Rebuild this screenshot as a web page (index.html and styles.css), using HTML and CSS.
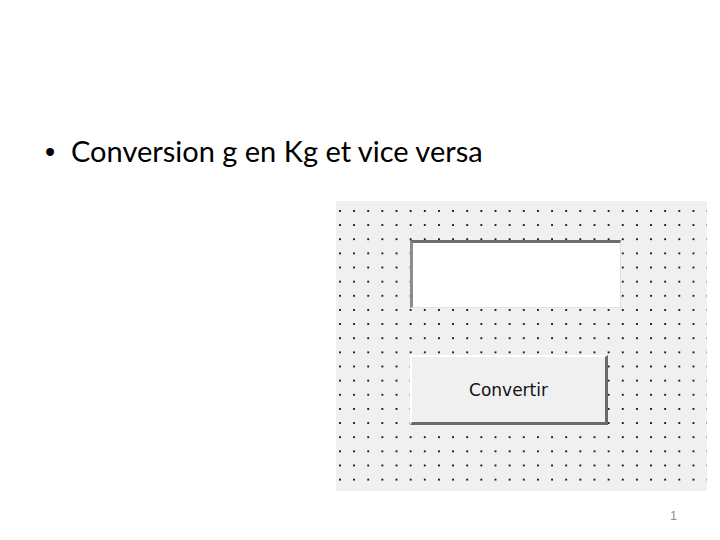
FILE: index.html
```html
<!DOCTYPE html>
<html lang="fr">
<head>
<meta charset="utf-8">
<title>Conversion</title>
<link rel="stylesheet" href="styles.css">
</head>
<body>
<div class="slide">
  <ul class="bullets">
    <li><span class="dot">•</span><span class="txt">Conversion g en Kg et vice versa</span></li>
  </ul>
  <div class="form">
    <div class="textbox"></div>
    <div class="button">Convertir</div>
  </div>
  <div class="footer"><span class="num">1</span></div>
</div>
</body>
</html>
```
FILE: styles.css
```css
html, body {
  margin: 0;
  padding: 0;
  background: #ffffff;
}
.slide {
  width: 720px;
  height: 540px;
  overflow: hidden;
  display: flex;
  flex-direction: column;
}
.bullets {
  list-style: none;
  margin: 0;
  padding: 131px 0 0 45px;
  font-family: Lato, "Liberation Sans", sans-serif;
  font-size: 29px;
  line-height: 40px;
  color: #000;
}
.bullets li {
  display: flex;
  align-items: baseline;
}
.dot {
  width: 26px;
  font-family: "Liberation Sans", sans-serif;
}
.form {
  margin: 29px 0 0 336px;
  width: 371px;
  height: 290px;
  box-sizing: border-box;
  padding: 39px 0 0 74px;
  background-color: #f0f0f0;
  background-image: radial-gradient(circle at 1px 1px, #1a1a1a 0, #1a1a1a 1px, transparent 1.3px);
  background-size: 14.15px 14.15px;
  background-position: 3px 9px;
  display: flex;
  flex-direction: column;
  gap: 47px;
}
.textbox {
  width: 211px;
  height: 68px;
  box-sizing: border-box;
  background: #ffffff;
  border-top: 3px solid #6d6d6d;
  border-left: 3px solid #8c8c8c;
  border-right: 1px solid #dedede;
  border-bottom: 1px solid #e2e2e2;
}
.button {
  width: 198px;
  height: 70px;
  box-sizing: border-box;
  background: #f0f0f0;
  border-top: 2px solid #ffffff;
  border-left: 2px solid #ffffff;
  border-right: 3px solid #6a6a6a;
  border-bottom: 3px solid #6a6a6a;
  display: flex;
  align-items: center;
  justify-content: center;
  font-family: "DejaVu Sans", sans-serif;
  font-size: 17px;
  color: #111;
}
.footer {
  display: flex;
  justify-content: flex-end;
  padding: 18px 43px 0 0;
  font-family: "Liberation Sans", sans-serif;
  font-size: 12px;
  color: #8a8a8a;
}
```
